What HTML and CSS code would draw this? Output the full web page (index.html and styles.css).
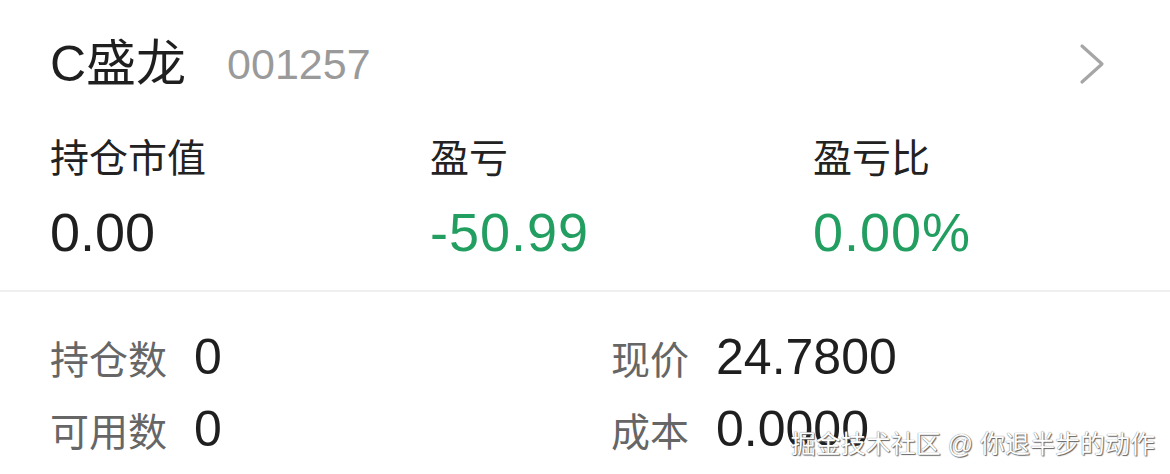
FILE: index.html
```html
<!DOCTYPE html>
<html lang="zh-CN">
<head>
<meta charset="utf-8">
<title>C盛龙 持仓</title>
<link rel="stylesheet" href="styles.css">
</head>
<body>
<div class="card">
  <div class="header">
    <span class="name">C盛龙</span>
    <span class="code">001257</span>
    <svg class="chevron" width="30" height="44" viewBox="0 0 30 44" aria-hidden="true">
      <polyline points="5,4 25,22 5,40" fill="none" stroke="#a6a6a6" stroke-width="3.2" stroke-linecap="round" stroke-linejoin="round"/>
    </svg>
  </div>
  <div class="summary">
    <div class="stat">
      <div class="stat-label">持仓市值</div>
      <div class="stat-value">0.00</div>
    </div>
    <div class="stat">
      <div class="stat-label">盈亏</div>
      <div class="stat-value green">-50.99</div>
    </div>
    <div class="stat">
      <div class="stat-label">盈亏比</div>
      <div class="stat-value green">0.00%</div>
    </div>
  </div>
  <div class="details">
    <div class="row"><span class="d-label">持仓数</span><span class="d-value">0</span></div>
    <div class="row"><span class="d-label">现价</span><span class="d-value">24.7800</span></div>
    <div class="row"><span class="d-label">可用数</span><span class="d-value">0</span></div>
    <div class="row"><span class="d-label">成本</span><span class="d-value">0.0000</span></div>
  </div>
  <div class="watermark">掘金技术社区 @ 你退半步的动作</div>
</div>
</body>
</html>
```
FILE: styles.css
```css
html, body {
  margin: 0;
  padding: 0;
  background: #ffffff;
}

body {
  font-family: "Liberation Sans", "Noto Sans CJK SC", sans-serif;
  color: #222222;
}

.card {
  position: relative;
  width: 1170px;
  height: 474px;
  overflow: hidden;
  background: #ffffff;
}

.header {
  display: flex;
  align-items: center;
  height: 128px;
  padding: 0 63px 0 50px;
}

.name {
  font-size: 50px;
  line-height: 60px;
  color: #1f1f1f;
}

.code {
  font-size: 43px;
  line-height: 60px;
  color: #9a9a9a;
  margin-left: 41px;
}

.chevron {
  margin-left: auto;
  display: block;
}

.summary {
  display: grid;
  grid-template-columns: 380px 383px 1fr;
  padding: 7px 0 26px 50px;
  border-bottom: 2px solid #efefef;
}

.stat-label {
  font-size: 39px;
  line-height: 48px;
  color: #222222;
}

.stat-value {
  font-size: 54px;
  line-height: 64px;
  margin-top: 17px;
  color: #1f1f1f;
}

.stat-value.green {
  color: #229f60;
  letter-spacing: 1px;
}

.details {
  display: grid;
  grid-template-columns: 561px 1fr;
  row-gap: 12px;
  padding: 35px 0 0 50px;
}

.row {
  display: flex;
  align-items: center;
  height: 60px;
  gap: 27px;
}

.d-label {
  font-size: 39px;
  color: #666666;
}

.d-value {
  font-size: 50px;
  color: #1f1f1f;
}

.watermark {
  position: absolute;
  right: 15px;
  bottom: 14px;
  font-size: 25px;
  line-height: 32px;
  color: #ffffff;
  text-shadow: 0 0 1px #555555, 1px 1px 1px #666666;
  white-space: nowrap;
}
```
